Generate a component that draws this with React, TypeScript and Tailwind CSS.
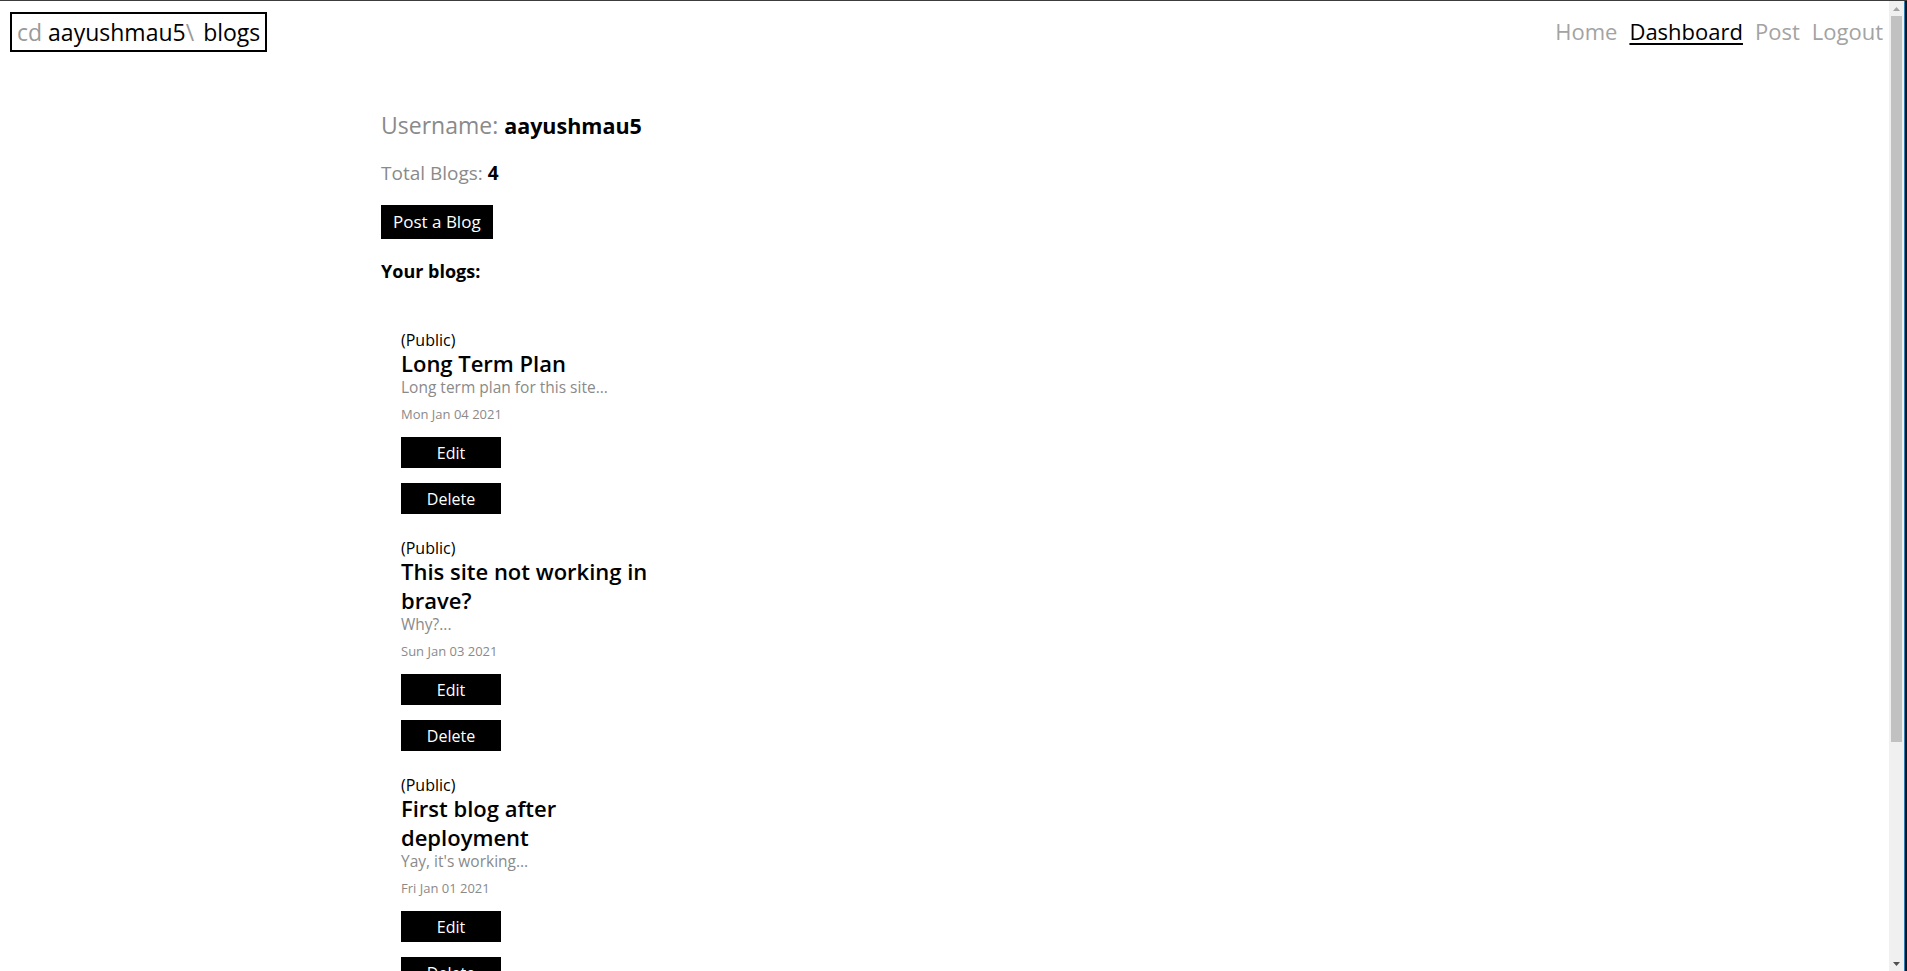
import React from 'react';

type Blog = {
  title: string;
  excerpt: string;
  date: string;
};

const blogs: Blog[] = [
  { title: 'Long Term Plan', excerpt: 'Long term plan for this site...', date: 'Mon Jan 04 2021' },
  { title: 'This site not working in brave?', excerpt: 'Why?...', date: 'Sun Jan 03 2021' },
  { title: 'First blog after deployment', excerpt: "Yay, it's working...", date: 'Fri Jan 01 2021' },
];

const Header = () => (
  <header className="flex items-center justify-between pl-[10px] pr-[6px] pt-[11px]">
    <a className="flex h-[40px] items-center border-2 border-black px-[5px] text-[23px] leading-none">
      <span className="text-[#9a9a9a]">cd</span>
      <span className="ml-[6px] text-black">aayushmau5</span>
      <span className="text-[#9a9a9a]">\</span>
      <span className="ml-[9px] text-black">blogs</span>
    </a>
    <nav className="-mt-[2px] flex items-center gap-[12px] text-[22px] text-[#a3a3a3]">
      <a>Home</a>
      <a className="text-black underline decoration-2 underline-offset-[3px]">Dashboard</a>
      <a>Post</a>
      <a>Logout</a>
    </nav>
  </header>
);

const BlogCard = ({ blog }: { blog: Blog }) => (
  <div className="w-[260px]">
    <p className="text-[16px] leading-[20px] text-black">(Public)</p>
    <h3 className="-mt-[1px] text-[22px] font-semibold leading-[29px] text-black">{blog.title}</h3>
    <p className="text-[15.5px] leading-[18px] text-[#8a8a8a]">{blog.excerpt}</p>
    <p className="mt-[8px] text-[13px] leading-[20px] text-[#8a8a8a]">{blog.date}</p>
    <button className="mt-[13px] block h-[31px] w-[100px] bg-black text-[16px] text-white">Edit</button>
    <button className="mt-[15px] block h-[31px] w-[100px] bg-black text-[16px] text-white">Delete</button>
  </div>
);

const Scrollbar = () => (
  <div className="flex w-[15px] flex-col items-center bg-[#f0f0f0]">
    <div className="flex h-[15px] items-center justify-center">
      <svg width="7" height="4" viewBox="0 0 7 4">
        <path d="M0 4 L3.5 0 L7 4 Z" fill="#a3a3a3" />
      </svg>
    </div>
    <div className="h-[726px] w-[11px] bg-[#c1c1c1]" />
    <div className="flex-1" />
    <div className="flex h-[15px] items-center justify-center">
      <svg width="7" height="4" viewBox="0 0 7 4">
        <path d="M0 0 L3.5 4 L7 0 Z" fill="#505050" />
      </svg>
    </div>
  </div>
);

export default function App() {
  return (
    <div className="flex h-[971px] w-full flex-col overflow-hidden font-['Open_Sans',sans-serif]">
      <div className="h-px bg-[#3c3c3c]" />
      <div className="flex min-h-0 flex-1">
        <div className="min-w-0 flex-1 overflow-hidden bg-white">
          <Header />
          <main className="pl-[381px] pt-[55px]">
            <h2 className="text-[23px] leading-[36px] text-[#8a8a8a]">
              Username: <span className="text-[21.5px] font-bold text-black">aayushmau5</span>
            </h2>
            <p className="mt-[14px] text-[19px] leading-[30px] text-[#8a8a8a]">
              Total Blogs: <span className="font-bold text-black">4</span>
            </p>
            <button className="mt-[17px] block h-[34px] bg-black px-[12px] text-[17px] text-white">Post a Blog</button>
            <h4 className="mt-[18px] text-[18px] font-bold leading-[28px] text-black">Your blogs:</h4>
            <div className="mt-[45px] flex flex-col gap-[24px] pl-[20px]">
              {blogs.map((b) => (
                <BlogCard key={b.title} blog={b} />
              ))}
            </div>
          </main>
        </div>
        <Scrollbar />
        <div className="w-[3px] border-l border-[#2f7fb0] bg-[#0e1420]" />
      </div>
    </div>
  );
}
